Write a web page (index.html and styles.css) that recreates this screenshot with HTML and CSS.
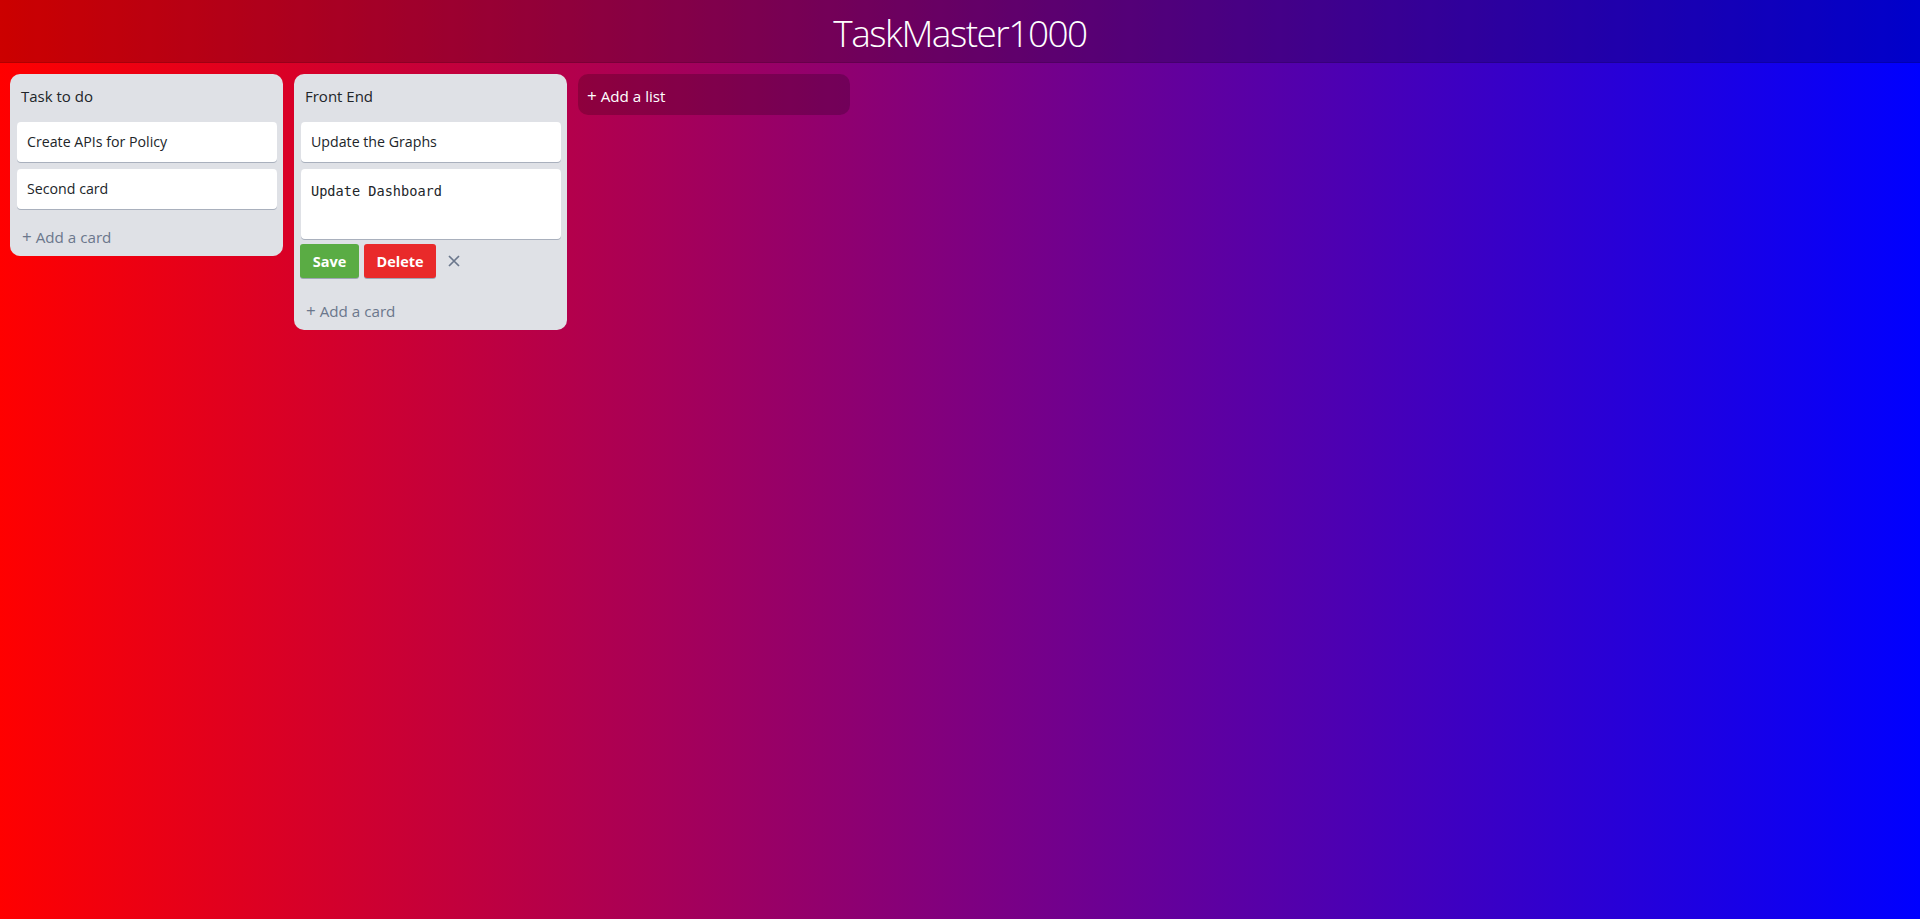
FILE: index.html
```html
<!DOCTYPE html>
<html lang="en">
<head>
<meta charset="utf-8">
<title>TaskMaster1000</title>
<link rel="stylesheet" href="styles.css">
</head>
<body>
<div class="app">
  <header class="header">
    <h1 class="brand">TaskMaster1000</h1>
  </header>
  <main class="board">
    <section class="list">
      <div class="list-title">Task to do</div>
      <div class="card">Create APIs for Policy</div>
      <div class="card">Second card</div>
      <div class="add-card"><span class="plus">+</span> Add a card</div>
    </section>
    <section class="list">
      <div class="list-title">Front End</div>
      <div class="card">Update the Graphs</div>
      <div class="card card-edit"><textarea class="edit-area">Update Dashboard</textarea></div>
      <div class="edit-actions">
        <button class="btn btn-save">Save</button>
        <button class="btn btn-delete">Delete</button>
        <span class="close">
          <svg width="14" height="14" viewBox="0 0 14 14"><path d="M2 2 L12 12 M12 2 L2 12" stroke="#6b778c" stroke-width="1.7" fill="none"/></svg>
        </span>
      </div>
      <div class="add-card"><span class="plus">+</span> Add a card</div>
    </section>
    <div class="add-list"><span class="plus">+</span> Add a list</div>
  </main>
</div>
</body>
</html>
```
FILE: styles.css
```css
html, body {
  margin: 0;
  padding: 0;
  height: 100%;
}
body {
  background: linear-gradient(to right, #ff0000, #0000ff);
  font-family: "Open Sans", "Noto Sans", sans-serif;
  color: #212529;
}
.app {
  min-height: 100%;
}
.header {
  height: 62px;
  background: rgba(0, 0, 0, 0.2);
  border-bottom: 1px solid rgba(0, 0, 0, 0.12);
  display: flex;
  align-items: center;
  justify-content: center;
}
.brand {
  margin: 0;
  font-family: "Open Sans", sans-serif;
  font-weight: 300;
  font-size: 37px;
  letter-spacing: -1.5px;
  color: #ffffff;
  line-height: 1;
  padding-top: 3px;
}
.board {
  display: flex;
  align-items: flex-start;
  gap: 11px;
  padding: 11px 10px;
}
.list {
  width: 273px;
  box-sizing: border-box;
  background: #dfe1e6;
  border-radius: 10px;
  padding: 0 6px 9px 7px;
}
.list-title {
  font-size: 15px;
  line-height: 20px;
  padding: 12px 4px 16px;
  color: #212529;
}
.card {
  background: #fff;
  border-radius: 4px;
  box-shadow: 0 1px 0 rgba(9, 30, 66, 0.25);
  padding: 10px 10px;
  font-size: 14.2px;
  line-height: 20px;
  margin-bottom: 7px;
  color: #212529;
}
.card-edit {
  padding: 0;
  margin-bottom: 5px;
}
.edit-area {
  display: block;
  width: 100%;
  box-sizing: border-box;
  height: 70px;
  border: none;
  resize: none;
  background: transparent;
  padding: 12px 10px 8px;
  font-family: "DejaVu Sans Mono", "Liberation Mono", monospace;
  font-size: 13.6px;
  line-height: 20px;
  color: #212529;
  outline: none;
}
.edit-actions {
  display: flex;
  align-items: center;
  gap: 5px;
  margin-left: -1px;
  margin-bottom: 12px;
}
.btn {
  height: 34px;
  border: none;
  border-radius: 3px;
  color: #fff;
  font-family: "Open Sans", sans-serif;
  font-weight: 700;
  font-size: 14.5px;
  padding: 0;
  box-shadow: 0 1px 0 rgba(9, 30, 66, 0.3);
}
.btn-save {
  background: #5aac44;
  width: 59px;
}
.btn-delete {
  background: #e92a2a;
  width: 72px;
}
.close {
  display: flex;
  align-items: center;
  justify-content: center;
  width: 20px;
  height: 20px;
  margin-left: 3px;
}
.add-card {
  font-size: 15.2px;
  line-height: 20px;
  padding: 11px 4px 0 5px;
  color: #6b778c;
}
.add-card .plus {
  font-size: 17px;
}
.add-list {
  width: 272px;
  box-sizing: border-box;
  height: 41px;
  background: rgba(0, 0, 0, 0.2);
  border-radius: 10px;
  color: #fff;
  font-size: 15.2px;
  line-height: 20px;
  padding: 12px 9px 9px;
}
.add-list .plus {
  font-size: 17px;
}
```
